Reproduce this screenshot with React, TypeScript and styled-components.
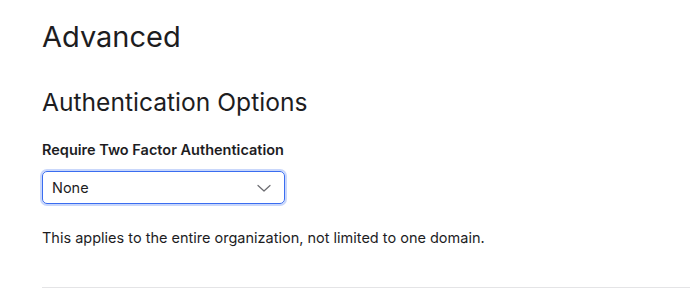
import React, { useState } from 'react'
import styled, { createGlobalStyle } from 'styled-components'

const GlobalStyle = createGlobalStyle`
  html, body {
    margin: 0;
    padding: 0;
    background: #ffffff;
  }
  body {
    font-family: Inter, "Noto Sans", sans-serif;
    color: #1d1d1f;
  }
`

const Page = styled.div`
  padding: 19px 0 0 42px;
  overflow: hidden;
`

const Title = styled.h1`
  margin: 0;
  font-size: 29px;
  font-weight: 400;
  line-height: 36px;
`

const SectionTitle = styled.h2`
  margin: 32px 0 0;
  font-size: 24.6px;
  font-weight: 400;
  line-height: 30px;
`

const Field = styled.div`
  margin-top: 24px;
  display: flex;
  flex-direction: column;
`

const Label = styled.label`
  font-size: 14.5px;
  font-weight: 600;
  line-height: 18px;
`

const SelectBox = styled.div`
  margin-top: 12px;
  width: 243px;
  height: 33px;
  box-sizing: border-box;
  border: 1.5px solid #3a6df0;
  border-radius: 5px;
  box-shadow: 0 0 0 2px #c9d7fb;
  display: flex;
  align-items: center;
  justify-content: space-between;
  padding: 0 12px 0 9px;
  font-size: 14.5px;
  cursor: pointer;
`

const Chevron = styled.svg`
  width: 16px;
  height: 16px;
  color: #6b6b70;
`

const Hint = styled.p`
  margin: 25px 0 0;
  font-size: 14.5px;
  line-height: 18px;
`

const Divider = styled.hr`
  margin: 40px 0 0;
  border: none;
  border-top: 1px solid #e4e4e6;
`

const App = () => {
  const [value] = useState('None')
  return (
    <>
      <GlobalStyle />
      <Page>
        <Title>Advanced</Title>
        <SectionTitle>Authentication Options</SectionTitle>
        <Field>
          <Label>Require Two Factor Authentication</Label>
          <SelectBox>
            <span>{value}</span>
            <Chevron viewBox="0 0 16 16" fill="none">
              <path d="M2 5.5l6 5.5 6-5.5" stroke="currentColor" strokeWidth="1.2" strokeLinecap="round" strokeLinejoin="round" />
            </Chevron>
          </SelectBox>
        </Field>
        <Hint>This applies to the entire organization, not limited to one domain.</Hint>
        <Divider />
      </Page>
    </>
  )
}

export default App
